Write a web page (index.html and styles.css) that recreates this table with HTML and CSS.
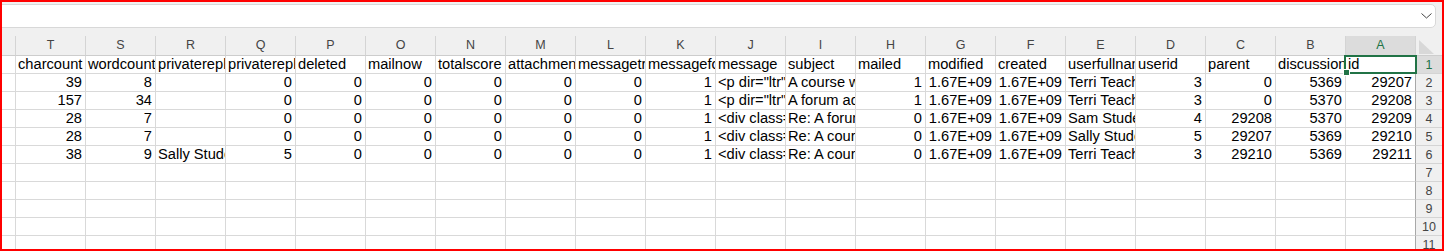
FILE: index.html
```html
<!DOCTYPE html>
<html lang="en">
<head>
  <meta charset="UTF-8">
  <meta name="viewport" content="width=device-width, initial-scale=1.0">
  <title>forum_posts.csv</title>
  <link rel="stylesheet" href="styles.css">
</head>
<body>
  <div class="frame">
    <div class="formula-area">
      <div class="formula-box">
        <svg class="chevron" width="11" height="6" viewBox="0 0 11 6">
          <polyline points="0.5,0.5 5.5,5 10.5,0.5" fill="none" stroke="#444" stroke-width="1"/>
        </svg>
      </div>
    </div>
    <div class="sheet" id="sheet"></div>
  </div>
  <script>
    document.addEventListener("DOMContentLoaded", () => {
      const sheet = document.getElementById("sheet");

      // Sheet is right-to-left: column A sits next to the row numbers
      const columns = ["T", "S", "R", "Q", "P", "O", "N", "M", "L", "K", "J", "I", "H", "G", "F", "E", "D", "C", "B", "A"];
      const data = [
        ["charcount", "wordcount", "privatereplytofullname", "privatereplyto", "deleted", "mailnow", "totalscore", "attachment", "messagetrust", "messageformat", "message", "subject", "mailed", "modified", "created", "userfullname", "userid", "parent", "discussion", "id"],
        [39, 8, "", 0, 0, 0, 0, 0, 0, 1, '<p dir="ltr" style="text-align: left;">', "A course wide announcement", 1, "1.67E+09", "1.67E+09", "Terri Teacher", 3, 0, 5369, 29207],
        [157, 34, "", 0, 0, 0, 0, 0, 0, 1, '<p dir="ltr" style="text-align: left;">', "A forum addressed to everyone", 1, "1.67E+09", "1.67E+09", "Terri Teacher", 3, 0, 5370, 29208],
        [28, 7, "", 0, 0, 0, 0, 0, 0, 1, '<div class="text_to_html">', "Re: A forum addressed to everyone", 0, "1.67E+09", "1.67E+09", "Sam Student", 4, 29208, 5370, 29209],
        [28, 7, "", 0, 0, 0, 0, 0, 0, 1, '<div class="text_to_html">', "Re: A course wide announcement", 0, "1.67E+09", "1.67E+09", "Sally Student", 5, 29207, 5369, 29210],
        [38, 9, "Sally Student", 5, 0, 0, 0, 0, 0, 1, '<div class="text_to_html">', "Re: A course wide announcement", 0, "1.67E+09", "1.67E+09", "Terri Teacher", 3, 29210, 5369, 29211]
      ];
      const totalRows = 11;

      const cell = (cls, text) => {
        const div = document.createElement("div");
        div.className = cls;
        if (text !== undefined) div.textContent = text;
        sheet.appendChild(div);
        return div;
      };

      // Column letters
      cell("head stub");
      columns.forEach(letter => cell(letter === "A" ? "head col-head active" : "head col-head", letter));
      cell("head corner").innerHTML = '<svg width="15" height="14" viewBox="0 0 15 14"><polygon points="0,0 0,14 15,14" fill="#d8d8d8"/></svg>';

      for (let r = 0; r < totalRows; r++) {
        const row = data[r] || [];
        cell("cell stub");
        columns.forEach((letter, i) => {
          const value = row[i] === undefined ? "" : String(row[i]);
          const isNumber = /^-?[\d.]+(E\+\d+)?$/.test(value);
          const div = cell(isNumber ? "cell num" : "cell", value);
          if (r === 0 && letter === "A") div.classList.add("selected");
        });
        cell(r === 0 ? "row-head active" : "row-head", r + 1);
      }
    });
  </script>
</body>
</html>
```

FILE: styles.css
```css
body {
  margin: 0;
  padding: 0;
  background-color: #fff;
  font-family: "Liberation Sans", Arial, sans-serif;
}
.frame {
  width: 1440px;
  height: 247px;
  border: 2px solid #ff0000;
  overflow: hidden;
  background-color: #fff;
}
.formula-area {
  height: 34px;
  padding: 2px 6px 0 0;
  box-sizing: border-box;
  background-color: #f0f0f0;
}
.formula-box {
  height: 24px;
  margin-left: -6px;
  padding-right: 3px;
  box-sizing: border-box;
  display: flex;
  align-items: center;
  justify-content: flex-end;
  background-color: #fff;
  border: 1px solid #d8d8d8;
  border-radius: 5px;
}
.sheet {
  display: grid;
  grid-template-columns: 13px repeat(20, 70px) 27px;
  grid-template-rows: 20px;
  grid-auto-rows: 18px;
}
.head {
  background-color: #f0f0f0;
  border-bottom: 1px solid #cdcdcd;
  box-sizing: border-box;
}
.col-head {
  border-left: 1px solid #d4d4d4;
  font-size: 12.5px;
  line-height: 19px;
  text-align: center;
  color: #444;
}
.col-head.active {
  background-color: #dcdcdc;
  color: #217346;
}
.corner {
  border-left: 1px solid #d4d4d4;
  padding: 4px 0 0 3px;
}
.corner svg {
  display: block;
}
.cell {
  border-left: 1px solid #d9d9d9;
  border-bottom: 1px solid #d9d9d9;
  box-sizing: border-box;
  padding: 0 3px 0 2px;
  font-size: 14.67px;
  line-height: 17px;
  color: #000;
  white-space: nowrap;
  overflow: hidden;
}
.cell.stub {
  border-left: none;
}
.cell.num {
  text-align: right;
}
.cell.selected {
  position: relative;
  overflow: visible;
}
.cell.selected::after {
  content: "";
  position: absolute;
  left: -2px;
  right: -2px;
  top: -1px;
  bottom: -1px;
  border: 2px solid #217346;
}
.cell.selected::before {
  content: "";
  position: absolute;
  left: -3px;
  bottom: -3px;
  width: 5px;
  height: 5px;
  background-color: #217346;
  border: 1px solid #fff;
  z-index: 1;
}
.row-head {
  background-color: #f0f0f0;
  border-left: 1px solid #a8a8a8;
  border-bottom: 1px solid #d4d4d4;
  box-sizing: border-box;
  font-size: 12.5px;
  line-height: 18px;
  text-align: center;
  color: #444;
}
.row-head.active {
  background-color: #dcdcdc;
  color: #217346;
}
```
